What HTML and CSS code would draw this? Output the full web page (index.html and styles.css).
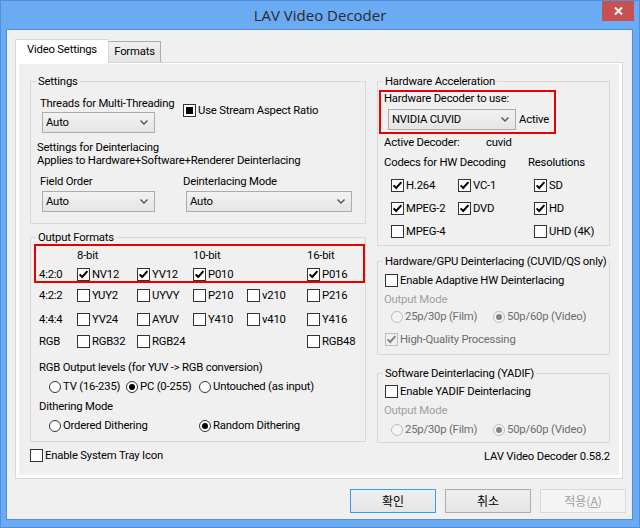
FILE: index.html
```html
<!DOCTYPE html>
<html lang="en">
<head>
<meta charset="utf-8">
<title>LAV Video Decoder</title>
<link rel="stylesheet" href="styles.css">
</head>
<body>
<div class="window">
  <div class="titlebar">
    <span></span>
    <span class="title">LAV Video Decoder</span>
    <div class="close"><svg width="9" height="8" viewBox="0 0 9 8"><path d="M1 0.5 L8 7.5 M8 0.5 L1 7.5" stroke="#fff" stroke-width="2" fill="none"/></svg></div>
  </div>
  <div class="client">
    <div class="tabs">
      <div class="tab active">Video Settings</div>
      <div class="tab">Formats</div>
    </div>
    <div class="panel">
      <div class="page">
        <div class="col">
          <div class="group g-settings">
            <div class="gtitle">Settings</div>
            <div class="srow">
              <div class="tcol">
                <div class="lbl t-threads">Threads for Multi-Threading</div>
                <div class="combo c-small c-threads"><span>Auto</span><svg width="8" height="5" viewBox="0 0 8 5"><path d="M0.5 0.5 L4 4 L7.5 0.5" stroke="#555" stroke-width="1.4" fill="none"/></svg></div>
              </div>
              <div class="check c-aspect"><span class="cb"><span class="ind"></span></span><span>Use Stream Aspect Ratio</span></div>
            </div>
            <div class="deint-note">Settings for Deinterlacing<br>Applies to Hardware+Software+Renderer Deinterlacing</div>
            <div class="srow f-row">
              <div class="tcol">
                <div class="lbl">Field Order</div>
                <div class="combo c-small c-field"><span>Auto</span><svg width="8" height="5" viewBox="0 0 8 5"><path d="M0.5 0.5 L4 4 L7.5 0.5" stroke="#555" stroke-width="1.4" fill="none"/></svg></div>
              </div>
              <div class="dcol">
                <div class="lbl">Deinterlacing Mode</div>
                <div class="combo c-wide"><span>Auto</span><svg width="8" height="5" viewBox="0 0 8 5"><path d="M0.5 0.5 L4 4 L7.5 0.5" stroke="#555" stroke-width="1.4" fill="none"/></svg></div>
              </div>
            </div>
          </div>

          <div class="group g-output">
            <div class="gtitle">Output Formats</div>
            <div class="redbox rb-formats">
              <div class="fgrid hdr">
                <span></span><span>8-bit</span><span></span><span>10-bit</span><span></span><span>16-bit</span>
              </div>
              <div class="fgrid frow r420">
                <span>4:2:0</span>
                <div class="check"><span class="cb"><svg width="11" height="11" viewBox="0 0 11 11"><path d="M1.6 5.4 L4.2 8 L9.4 2.2" stroke="#000" stroke-width="2" fill="none"/></svg></span><span>NV12</span></div>
                <div class="check"><span class="cb"><svg width="11" height="11" viewBox="0 0 11 11"><path d="M1.6 5.4 L4.2 8 L9.4 2.2" stroke="#000" stroke-width="2" fill="none"/></svg></span><span>YV12</span></div>
                <div class="check"><span class="cb"><svg width="11" height="11" viewBox="0 0 11 11"><path d="M1.6 5.4 L4.2 8 L9.4 2.2" stroke="#000" stroke-width="2" fill="none"/></svg></span><span>P010</span></div>
                <span></span>
                <div class="check"><span class="cb"><svg width="11" height="11" viewBox="0 0 11 11"><path d="M1.6 5.4 L4.2 8 L9.4 2.2" stroke="#000" stroke-width="2" fill="none"/></svg></span><span>P016</span></div>
              </div>
            </div>
            <div class="fgrid frow r422">
              <span>4:2:2</span>
              <div class="check"><span class="cb"></span><span>YUY2</span></div>
              <div class="check"><span class="cb"></span><span>UYVY</span></div>
              <div class="check"><span class="cb"></span><span>P210</span></div>
              <div class="check"><span class="cb"></span><span>v210</span></div>
              <div class="check"><span class="cb"></span><span>P216</span></div>
            </div>
            <div class="fgrid frow r444">
              <span>4:4:4</span>
              <div class="check"><span class="cb"></span><span>YV24</span></div>
              <div class="check"><span class="cb"></span><span>AYUV</span></div>
              <div class="check"><span class="cb"></span><span>Y410</span></div>
              <div class="check"><span class="cb"></span><span>v410</span></div>
              <div class="check"><span class="cb"></span><span>Y416</span></div>
            </div>
            <div class="fgrid frow rrgb">
              <span>RGB</span>
              <div class="check"><span class="cb"></span><span>RGB32</span></div>
              <div class="check"><span class="cb"></span><span>RGB24</span></div>
              <span></span>
              <span></span>
              <div class="check"><span class="cb"></span><span>RGB48</span></div>
            </div>
            <div class="lbl o-levels">RGB Output levels (for YUV -&gt; RGB conversion)</div>
            <div class="radios r-levels">
              <div class="radio w-tv"><span class="rb"></span><span>TV (16-235)</span></div>
              <div class="radio w-pc"><span class="rb on"></span><span>PC (0-255)</span></div>
              <div class="radio"><span class="rb"></span><span>Untouched (as input)</span></div>
            </div>
            <div class="lbl o-dith">Dithering Mode</div>
            <div class="radios r-dith">
              <div class="radio w-ord"><span class="rb"></span><span>Ordered Dithering</span></div>
              <div class="radio"><span class="rb on"></span><span>Random Dithering</span></div>
            </div>
          </div>

          <div class="check c-tray"><span class="cb"></span><span>Enable System Tray Icon</span></div>
        </div>

        <div class="col">
          <div class="group g-hw">
            <div class="gtitle">Hardware Acceleration</div>
            <div class="redbox rb-hw">
              <div class="lbl hw-lbl">Hardware Decoder to use:</div>
              <div class="hw-row">
                <div class="combo c-hw"><span>NVIDIA CUVID</span><svg width="8" height="5" viewBox="0 0 8 5"><path d="M0.5 0.5 L4 4 L7.5 0.5" stroke="#555" stroke-width="1.4" fill="none"/></svg></div>
                <span class="active-lbl">Active</span>
              </div>
            </div>
            <div class="kv ad-row"><span class="k">Active Decoder:</span><span>cuvid</span></div>
            <div class="kv codec-hdr"><span class="k2">Codecs for HW Decoding</span><span>Resolutions</span></div>
            <div class="cgrid">
              <div class="check"><span class="cb"><svg width="11" height="11" viewBox="0 0 11 11"><path d="M1.6 5.4 L4.2 8 L9.4 2.2" stroke="#000" stroke-width="2" fill="none"/></svg></span><span>H.264</span></div>
              <div class="check"><span class="cb"><svg width="11" height="11" viewBox="0 0 11 11"><path d="M1.6 5.4 L4.2 8 L9.4 2.2" stroke="#000" stroke-width="2" fill="none"/></svg></span><span>VC-1</span></div>
              <div class="check"><span class="cb"><svg width="11" height="11" viewBox="0 0 11 11"><path d="M1.6 5.4 L4.2 8 L9.4 2.2" stroke="#000" stroke-width="2" fill="none"/></svg></span><span>SD</span></div>
              <div class="check"><span class="cb"><svg width="11" height="11" viewBox="0 0 11 11"><path d="M1.6 5.4 L4.2 8 L9.4 2.2" stroke="#000" stroke-width="2" fill="none"/></svg></span><span>MPEG-2</span></div>
              <div class="check"><span class="cb"><svg width="11" height="11" viewBox="0 0 11 11"><path d="M1.6 5.4 L4.2 8 L9.4 2.2" stroke="#000" stroke-width="2" fill="none"/></svg></span><span>DVD</span></div>
              <div class="check"><span class="cb"><svg width="11" height="11" viewBox="0 0 11 11"><path d="M1.6 5.4 L4.2 8 L9.4 2.2" stroke="#000" stroke-width="2" fill="none"/></svg></span><span>HD</span></div>
              <div class="check"><span class="cb"></span><span>MPEG-4</span></div>
              <span></span>
              <div class="check"><span class="cb"></span><span>UHD (4K)</span></div>
            </div>
          </div>

          <div class="group g-gpu">
            <div class="gtitle">Hardware/GPU Deinterlacing (CUVID/QS only)</div>
            <div class="check c-first"><span class="cb"></span><span>Enable Adaptive HW Deinterlacing</span></div>
            <div class="lbl om">Output Mode</div>
            <div class="radios r-gpu">
              <div class="radio dis w-film"><span class="rb"></span><span>25p/30p (Film)</span></div>
              <div class="radio dis"><span class="rb on"></span><span>50p/60p (Video)</span></div>
            </div>
            <div class="check dis c-hq"><span class="cb"><svg width="11" height="11" viewBox="0 0 11 11"><path d="M1.6 5.4 L4.2 8 L9.4 2.2" stroke="#838383" stroke-width="2" fill="none"/></svg></span><span>High-Quality Processing</span></div>
          </div>

          <div class="group g-sw">
            <div class="gtitle">Software Deinterlacing (YADIF)</div>
            <div class="check c-first"><span class="cb"></span><span>Enable YADIF Deinterlacing</span></div>
            <div class="lbl om">Output Mode</div>
            <div class="radios r-sw">
              <div class="radio dis w-film"><span class="rb"></span><span>25p/30p (Film)</span></div>
              <div class="radio dis"><span class="rb on"></span><span>50p/60p (Video)</span></div>
            </div>
          </div>

          <div class="version">LAV Video Decoder 0.58.2</div>
        </div>
      </div>
    </div>
    <div class="buttons">
      <div class="btn default">확인</div>
      <div class="btn">취소</div>
      <div class="btn disabled">적용(<u>A</u>)</div>
    </div>
  </div>
</div>
</body>
</html>
```

FILE: styles.css
```css
* { box-sizing: border-box; }

body {
  margin: 0;
  background: #ffffff;
  font-family: "Roboto", "Open Sans", sans-serif;
  font-size: 11.3px;
  letter-spacing: -0.2px;
  line-height: 15px;
  color: #000;
  white-space: nowrap;
}

.window {
  width: 640px;
  height: 528px;
  background: #6aabf4;
  border: 1px solid #4f8fdc;
}

.titlebar {
  height: 28px;
  display: grid;
  grid-template-columns: 1fr auto 1fr;
}
.title {
  font-family: "Open Sans", sans-serif;
  font-size: 15px;
  letter-spacing: 0;
  line-height: 29px;
  color: #2a2a2a;
}
.close {
  justify-self: end;
  align-self: start;
  width: 32px;
  height: 20px;
  margin-right: 5px;
  background: #c75050;
  display: flex;
  align-items: center;
  justify-content: center;
}

.client {
  margin: 0 6px 0 5px;
  height: 491px;
  border: 1px solid #4f8fdc;
  background: #f0f0f0;
  padding: 9px 0 0 8px;
}

/* tabs */
.tabs {
  display: flex;
  align-items: flex-end;
  height: 24px;
  margin-bottom: -1px;
}
.tab {
  width: 53px;
  height: 21px;
  margin-left: -1px;
  margin-bottom: 1px;
  padding-top: 2px;
  border: 1px solid #acacac;
  border-bottom: 0;
  background: linear-gradient(#f0f0f0, #e5e5e5);
  text-align: center;
}
.tab.active {
  width: 94px;
  height: 24px;
  margin: 0;
  padding-top: 2px;
  background: #fff;
  border-color: #d9d9d9;
  position: relative;
  z-index: 1;
}

.panel {
  width: 608px;
  height: 417px;
  border: 1px solid #d9d9d9;
  background: #fff;
  padding: 1px 3px 3px 3px;
}
.page {
  height: 100%;
  background: #f0f0f0;
  padding: 17px 9px 0 11px;
  display: grid;
  grid-template-columns: 336px 233px;
  column-gap: 11px;
  align-items: start;
}

/* group boxes */
.group { border: 1px solid #d9d9d9; }
.gtitle {
  width: max-content;
  margin: -8px 0 -7px 5px;
  padding: 0 2px;
  background: #f0f0f0;
  line-height: 15px;
}

.redbox { border: 2px solid #e60000; }

/* combos */
.combo {
  height: 21px;
  border: 1px solid #acacac;
  background: linear-gradient(#f2f2f2, #e5e5e5);
  display: flex;
  align-items: center;
  justify-content: space-between;
  padding: 0 6px 0 3px;
}
.c-small { width: 113px; margin-left: 2px; }
.c-wide { width: 166px; margin-left: 3px; margin-top: 2px; }
.c-hw { width: 128px; }

/* checkboxes & radios */
.check {
  display: flex;
  align-items: center;
  gap: 2px;
  height: 13px;
  line-height: 13px;
}
.cb {
  flex: none;
  width: 13px;
  height: 13px;
  border: 1px solid #333;
  background: #fff;
  display: flex;
  align-items: center;
  justify-content: center;
}
.ind { width: 7px; height: 7px; background: #000; }
.check.dis { color: #6d6d6d; }
.check.dis .cb { border-color: #bcbcbc; background: #f0f0f0; }

.radios { display: flex; height: 12px; }
.radio {
  display: flex;
  align-items: center;
  gap: 2px;
  height: 12px;
  line-height: 12px;
}
.rb {
  flex: none;
  width: 12px;
  height: 12px;
  border: 1px solid #333;
  border-radius: 50%;
  background: #fff;
  display: flex;
  align-items: center;
  justify-content: center;
}
.rb.on::after {
  content: "";
  width: 6px;
  height: 6px;
  border-radius: 50%;
  background: #000;
}
.radio.dis { color: #6d6d6d; }
.radio.dis .rb { border-color: #bcbcbc; background: #f4f4f4; }
.radio.dis .rb.on::after { background: #838383; }

/* Settings group */
.g-settings { padding-bottom: 11px; }
.srow { display: flex; }
.tcol { width: 152px; padding-left: 9px; }
.t-threads { margin-top: 14px; }
.c-threads { margin-top: 1px; }
.c-aspect { margin-top: 22px; }
.deint-note { margin-top: 8px; padding-left: 6px; line-height: 13px; }
.f-row { margin-top: 7px; }
.c-field { margin-top: 2px; }

/* Output formats */
.g-output { margin-top: 13px; padding-bottom: 9px; }
.rb-formats { margin: 6px 0 0 3px; padding: 2px 0 0 3px; }
.fgrid {
  display: grid;
  grid-template-columns: 38px 60px 56px 54px 60px 1fr;
  align-items: center;
}
.hdr { height: 15px; }
.frow { height: 13px; line-height: 13px; }
.r420 { margin-top: 5px; }
.r422, .r444, .rrgb { padding-left: 8px; }
.r422 { margin-top: 6px; }
.r444 { margin-top: 11px; }
.rrgb { margin-top: 9px; }
.o-levels { margin-top: 12px; padding-left: 8px; }
.r-levels { margin-top: 6px; padding-left: 18px; }
.w-tv { width: 77px; }
.w-pc { width: 73px; }
.o-dith { margin-top: 6px; padding-left: 8px; }
.r-dith { margin-top: 6px; padding-left: 18px; }
.w-ord { width: 150px; }
.c-tray { margin-top: 7px; }

/* Hardware acceleration */
.g-hw { padding-bottom: 7px; }
.rb-hw { width: 177px; margin: 8px 0 0 1px; padding: 0 0 2px 3px; }
.hw-lbl { line-height: 13px; }
.hw-row { display: flex; align-items: center; margin-top: 4px; margin-left: 4px; }
.active-lbl { margin-left: 3px; }
.kv { display: flex; padding-left: 6px; }
.ad-row { margin-top: 1px; }
.ad-row .k { width: 102px; }
.codec-hdr { margin-top: 5px; }
.codec-hdr .k2 { width: 144px; }
.cgrid {
  display: grid;
  grid-template-columns: 67px 76px 1fr;
  grid-template-rows: 13px 13px 13px;
  row-gap: 10px;
  margin-top: 9px;
  padding-left: 13px;
}

.g-gpu { margin-top: 15px; padding-bottom: 8px; }
.c-first { margin-top: 12px; margin-left: 7px; }
.om { margin-top: 5px; padding-left: 6px; color: #a0a0a0; }
.r-gpu { margin-top: 4px; padding-left: 13px; }
.w-film { width: 102px; }
.c-hq { margin-top: 10px; margin-left: 7px; }

.g-sw { margin-top: 18px; padding-bottom: 6px; }
.g-sw .c-first { margin-top: 11px; }
.r-sw { margin-top: 6px; padding-left: 13px; }

.version { margin-top: 6px; text-align: right; }

/* buttons */
.buttons {
  display: flex;
  justify-content: flex-end;
  gap: 9px;
  margin-top: 10px;
  padding-right: 6px;
}
.btn {
  width: 86px;
  height: 24px;
  border: 1px solid #acacac;
  background: linear-gradient(#f0f0f0, #e5e5e5);
  font-family: "Noto Sans CJK KR", "Open Sans", sans-serif;
  font-size: 12px;
  letter-spacing: 0;
  line-height: 22px;
  text-align: center;
}
.btn.default { border-color: #3c9bf0; }
.btn.disabled {
  border-color: #d9d9d9;
  background: #f4f4f4;
  color: #a0a0a0;
}
.btn u { text-underline-offset: 1px; }
```
